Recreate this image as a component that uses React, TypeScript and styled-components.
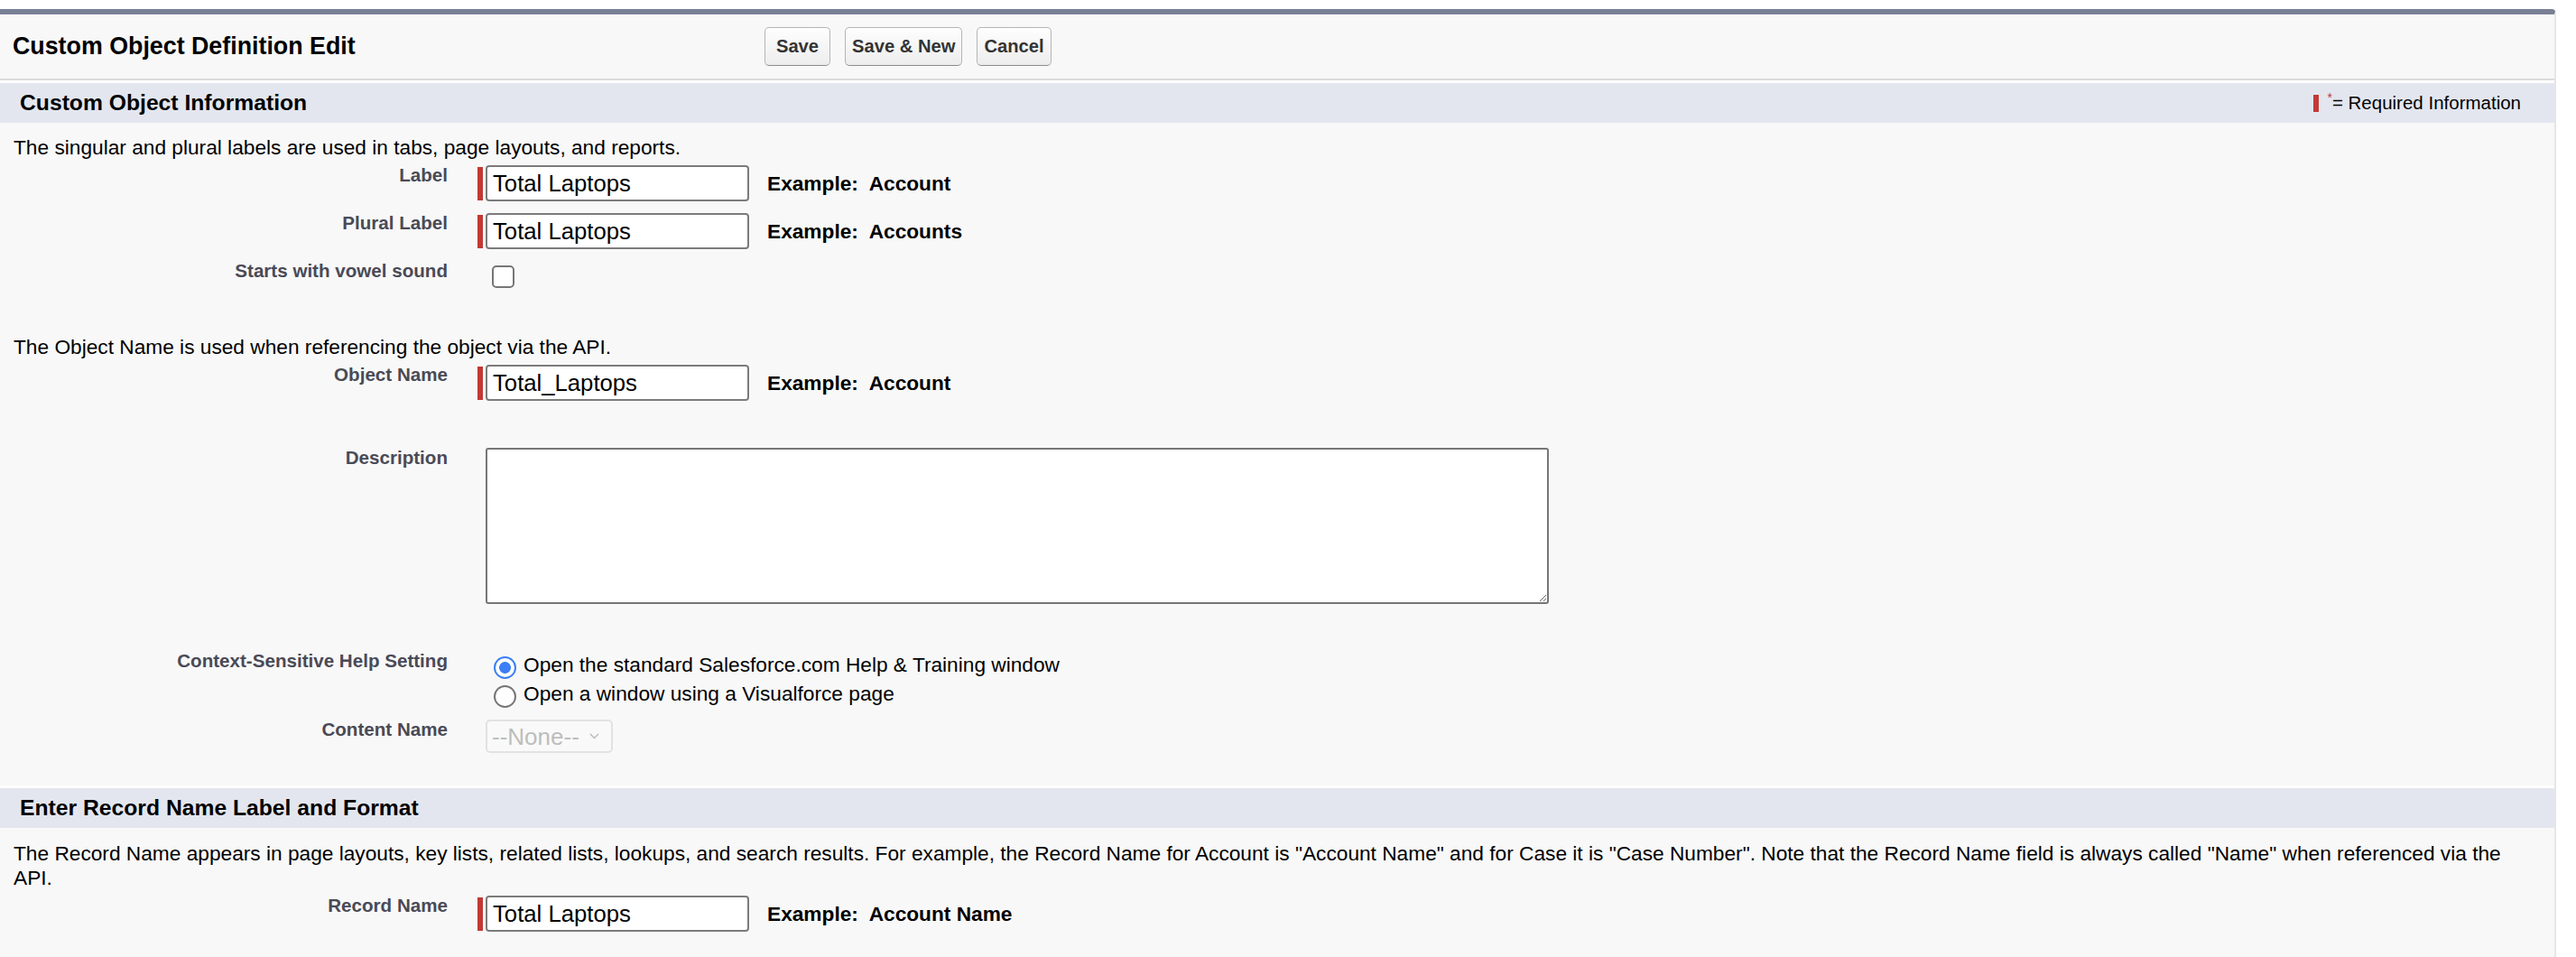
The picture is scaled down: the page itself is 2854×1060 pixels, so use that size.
import React from "react";
import styled, { createGlobalStyle } from "styled-components";

const FONT = `"Liberation Sans", Arial, Helvetica, sans-serif`;

const GlobalStyle = createGlobalStyle`
  html, body { margin: 0; padding: 0; background: #ffffff; }
  body { font-family: ${FONT}; color: #000; }
  * { box-sizing: border-box; }
`;

const PageBlock = styled.div`
  display: flex;
  flex-direction: column;
  margin-top: 10px;
  width: 2832px;
  min-height: 1050px;
  background: #f8f8f8;
  border-top: 6px solid #7a8094;
  border-right: 2px solid #e6e6e6;
  border-top-right-radius: 5px;
`;

const Header = styled.div`
  display: flex;
  align-items: center;
  height: 73px;
  border-bottom: 2px solid #dbdbdb;
`;

const Title = styled.h2`
  margin: 0;
  width: 847px;
  padding-left: 14px;
  font-size: 26.8px;
  font-weight: bold;
  color: #000;
`;

const ButtonBar = styled.div`
  display: flex;
  gap: 16px;
`;

const Button = styled.button`
  height: 43px;
  min-width: 73px;
  padding: 0 7px;
  font-family: ${FONT};
  font-size: 20.2px;
  font-weight: bold;
  color: #333;
  background: linear-gradient(#fefefe, #ededed);
  border: 1px solid #b5b5b5;
  border-bottom-color: #8c8c8c;
  border-radius: 5px;
`;

const SectionBand = styled.div<{ $gap?: number }>`
  display: flex;
  align-items: center;
  justify-content: space-between;
  height: 47px;
  margin-top: ${(p) => p.$gap ?? 0}px;
  padding: 0 37px 0 22px;
  border-top: 3px solid #ffffff;
  background: #e3e6ef;
`;

const BandTitle = styled.h3`
  margin: 0;
  font-size: 24.7px;
  font-weight: bold;
  color: #000;
`;

const Legend = styled.div`
  display: flex;
  align-items: center;
  font-size: 20.5px;
  color: #000;
`;

const LegendBar = styled.span`
  width: 6px;
  height: 19px;
  background: #c23934;
  margin-right: 9px;
`;

const Star = styled.span`
  color: #c23934;
  font-size: 14px;
  transform: translateY(-6px);
`;

const Desc = styled.p<{ $top: number }>`
  margin: ${(p) => p.$top}px 0 6px;
  padding: 0 15px;
  font-size: 22.7px;
  line-height: 27px;
  color: #000;
`;

const Row = styled.div<{ $top?: number }>`
  display: grid;
  grid-template-columns: 496px 1fr;
  column-gap: 33px;
  align-items: start;
  margin: ${(p) => p.$top ?? 0}px 0 13px;
`;

const FieldLabel = styled.label`
  margin-top: -1px;
  text-align: right;
  font-size: 20.6px;
  font-weight: bold;
  line-height: 24px;
  color: #4a4a56;
`;

const DataCell = styled.div<{ $indent?: boolean }>`
  display: flex;
  align-items: center;
  gap: 20px;
  padding-left: ${(p) => (p.$indent ? 9 : 0)}px;
`;

const Required = styled.div`
  display: flex;
  align-items: center;
  gap: 3px;
`;

const RequiredBar = styled.span`
  width: 6px;
  height: 37px;
  background: #c23934;
`;

const TextInput = styled.input`
  width: 292px;
  height: 40px;
  padding: 0 6px;
  font-family: ${FONT};
  font-size: 25.7px;
  color: #000;
  background: #fff;
  border: 2px solid #7b7b7b;
  border-radius: 4px;
  outline: none;
`;

const Example = styled.span`
  font-size: 22.7px;
  font-weight: bold;
  color: #000;
  white-space: pre;
`;

const CheckBox = styled.input`
  appearance: none;
  width: 25px;
  height: 25px;
  margin: 5px 0 0 7px;
  background: #fff;
  border: 2px solid #767676;
  border-radius: 5px;
`;

const TextArea = styled.textarea`
  display: block;
  width: 1178px;
  height: 173px;
  background: #fff;
  border: 2px solid #767676;
  border-radius: 3px;
  outline: none;
`;

const Options = styled.div`
  display: flex;
  flex-direction: column;
  padding-left: 9px;
`;

const Option = styled.label`
  display: flex;
  align-items: center;
  height: 31.5px;
  font-size: 22.7px;
  color: #000;
`;

const Radio = styled.input`
  appearance: none;
  flex: none;
  width: 25px;
  height: 25px;
  margin: 6px 8px 0 9px;
  border-radius: 50%;
  border: 2px solid #767676;
  background: #fff;
  &:checked {
    border-color: #3b7ef5;
    background: radial-gradient(circle, #3b7ef5 0 6px, #ffffff 6.8px 100%);
  }
`;

const SelectWrap = styled.div`
  position: relative;
  width: 141px;
  height: 37px;
`;

const Select = styled.select`
  appearance: none;
  width: 141px;
  height: 37px;
  padding: 0 0 0 5px;
  font-family: ${FONT};
  font-size: 26px;
  color: #bdbdbd;
  background: #f9f9f9;
  border: 2px solid #e2e2e2;
  border-radius: 5px;
  opacity: 1;
`;

const Chevron = styled.svg`
  position: absolute;
  right: 15px;
  top: 15px;
  pointer-events: none;
`;

type FieldProps = { label: string; value: string; example: string };

function RequiredField({ label, value, example }: FieldProps) {
  return (
    <Row>
      <FieldLabel>{label}</FieldLabel>
      <DataCell>
        <Required>
          <RequiredBar />
          <TextInput defaultValue={value} />
        </Required>
        <Example>{`Example:  ${example}`}</Example>
      </DataCell>
    </Row>
  );
}

export default function App() {
  return (
    <>
      <GlobalStyle />
      <PageBlock>
        <Header>
          <Title>Custom Object Definition Edit</Title>
          <ButtonBar>
            <Button>Save</Button>
            <Button>Save &amp; New</Button>
            <Button>Cancel</Button>
          </ButtonBar>
        </Header>

        <SectionBand>
          <BandTitle>Custom Object Information</BandTitle>
          <Legend>
            <LegendBar />
            <Star>*</Star>
            <span>= Required Information</span>
          </Legend>
        </SectionBand>

        <Desc $top={14}>The singular and plural labels are used in tabs, page layouts, and reports.</Desc>
        <RequiredField label="Label" value="Total Laptops" example="Account" />
        <RequiredField label="Plural Label" value="Total Laptops" example="Accounts" />
        <Row>
          <FieldLabel>Starts with vowel sound</FieldLabel>
          <DataCell $indent>
            <CheckBox type="checkbox" />
          </DataCell>
        </Row>

        <Desc $top={39}>The Object Name is used when referencing the object via the API.</Desc>
        <RequiredField label="Object Name" value="Total_Laptops" example="Account" />
        <Row $top={39}>
          <FieldLabel>Description</FieldLabel>
          <DataCell $indent>
            <TextArea />
          </DataCell>
        </Row>
        <Row $top={39}>
          <FieldLabel>Context-Sensitive Help Setting</FieldLabel>
          <Options>
            <Option>
              <Radio type="radio" name="help" defaultChecked />
              Open the standard Salesforce.com Help &amp; Training window
            </Option>
            <Option>
              <Radio type="radio" name="help" />
              Open a window using a Visualforce page
            </Option>
          </Options>
        </Row>
        <Row>
          <FieldLabel>Content Name</FieldLabel>
          <DataCell $indent>
            <SelectWrap>
              <Select disabled defaultValue="none">
                <option value="none">--None--</option>
              </Select>
              <Chevron width="11" height="7" viewBox="0 0 11 7">
                <path d="M1 1 L5.5 5.5 L10 1" fill="none" stroke="#b8b8b8" strokeWidth="1.4" />
              </Chevron>
            </SelectWrap>
          </DataCell>
        </Row>

        <SectionBand $gap={23}>
          <BandTitle>Enter Record Name Label and Format</BandTitle>
        </SectionBand>
        <Desc $top={15}>
          The Record Name appears in page layouts, key lists, related lists, lookups, and search results. For example, the
          Record Name for Account is "Account Name" and for Case it is "Case Number". Note that the Record Name field is
          always called "Name" when referenced via the API.
        </Desc>
        <RequiredField label="Record Name" value="Total Laptops" example="Account Name" />
      </PageBlock>
    </>
  );
}
